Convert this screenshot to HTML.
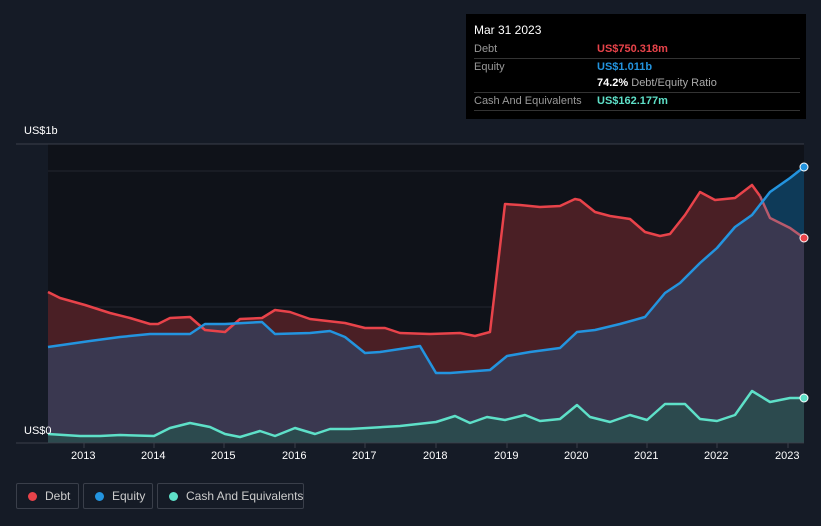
<!DOCTYPE html>
<html><head><meta charset="utf-8"><style>
body{margin:0;width:821px;height:526px;background:#151b26;font-family:"Liberation Sans",sans-serif;overflow:hidden;position:relative}
.tt{position:absolute;left:466px;top:14px;width:340px;height:105px;background:#000;color:#fff;font-size:11px}
.tt .r{position:absolute;left:8px;right:6px;height:18px;border-bottom:1px solid #333;line-height:18px}
.tt .l{color:#999;position:absolute;left:0}
.tt .v{position:absolute;left:123px;font-weight:bold}
.ax{position:absolute;color:#fff;font-size:11px}
.lg{position:absolute;top:483px;height:26px;border:1px solid #3a3f4a;border-radius:2px;color:#ccc;font-size:12px;line-height:24px;box-sizing:border-box;white-space:nowrap}
.lg i{position:absolute;left:11px;top:8px;width:9px;height:9px;border-radius:50%}
</style></head><body>
<svg width="821" height="526" style="position:absolute;left:0;top:0">
<rect x="48" y="144" width="756" height="300" fill="#0f1219"/>
<line x1="16" y1="144" x2="804" y2="144" stroke="#3a3f4a"/>
<line x1="48" y1="171" x2="804" y2="171" stroke="#23272f"/>
<line x1="48" y1="307" x2="804" y2="307" stroke="#23272f"/>
<polygon fill="#0e3a58" points="48,443 48,347 90,341 120,337 150,334 190,334 205,324 225,324 262,322 275,334 310,333 330,331 345,337 365,353 380,352 400,349 420,346 436,373 450,373 490,370 507,356 530,352 560,348 577,332 595,330 620,324 645,317 665,293 680,283 700,263 717,248 735,227 752,215 770,192 790,178 804,167 804,443"/>
<polygon fill="#4a1f25" points="48,443 48,292 60,298 85,305 110,313 130,318 150,324 158,324 170,318 190,317 205,330 225,332 240,319 262,318 275,310 290,312 310,319 345,323 365,328 385,328 400,333 430,334 460,333 475,336 490,332 505,204 520,205 540,207 560,206 575,199 580,200 595,212 610,216 630,219 645,232 660,236 670,234 685,215 700,192 715,200 735,198 752,185 760,196 770,218 790,228 804,238 804,443"/>
<polygon fill="#3a3850" points="48,443 48,347 90,341 120,337 150,334 190,334 205,324 225,324 262,322 275,334 310,333 330,331 345,337 365,353 380,352 400,349 420,346 436,373 450,373 490,370 507,356 530,352 560,348 577,332 595,330 620,324 645,317 665,293 680,283 700,263 717,248 735,227 752,215 763,205 770,218 790,228 804,238 804,443"/>
<polygon fill="#2c4a4e" points="48,443 48,434 80,436 100,436 120,435 154,436 170,428 190,423 210,427 225,434 240,437 260,431 275,436 295,428 315,434 330,429 350,429 400,426 436,422 455,416 470,423 487,417 505,420 525,415 540,421 560,419 577,405 590,417 610,422 630,415 647,420 665,404 685,404 700,419 717,421 735,415 752,391 770,402 790,398 804,398 804,443"/>
<polyline fill="none" stroke="#e8434a" stroke-width="2.5" stroke-linejoin="round" points="48,292 60,298 85,305 110,313 130,318 150,324 158,324 170,318 190,317 205,330 225,332 240,319 262,318 275,310 290,312 310,319 345,323 365,328 385,328 400,333 430,334 460,333 475,336 490,332 505,204 520,205 540,207 560,206 575,199 580,200 595,212 610,216 630,219 645,232 660,236 670,234 685,215 700,192 715,200 735,198 752,185 760,196"/>
<polyline fill="none" stroke="#b85a6c" stroke-width="2.5" points="760,196 770,218 790,228 804,238"/>
<polyline fill="none" stroke="#2394df" stroke-width="2.5" stroke-linejoin="round" points="48,347 90,341 120,337 150,334 190,334 205,324 225,324 262,322 275,334 310,333 330,331 345,337 365,353 380,352 400,349 420,346 436,373 450,373 490,370 507,356 530,352 560,348 577,332 595,330 620,324 645,317 665,293 680,283 700,263 717,248 735,227 752,215 770,192 790,178 804,167"/>
<polyline fill="none" stroke="#5ee0c8" stroke-width="2.5" stroke-linejoin="round" points="48,434 80,436 100,436 120,435 154,436 170,428 190,423 210,427 225,434 240,437 260,431 275,436 295,428 315,434 330,429 350,429 400,426 436,422 455,416 470,423 487,417 505,420 525,415 540,421 560,419 577,405 590,417 610,422 630,415 647,420 665,404 685,404 700,419 717,421 735,415 752,391 770,402 790,398 804,398"/>
<line x1="16" y1="443" x2="804" y2="443" stroke="#3a3f4a"/>
<g stroke="#3a3f4a"><line x1="84" y1="443" x2="84" y2="448"/><line x1="154" y1="443" x2="154" y2="448"/><line x1="224" y1="443" x2="224" y2="448"/><line x1="295" y1="443" x2="295" y2="448"/><line x1="365" y1="443" x2="365" y2="448"/><line x1="436" y1="443" x2="436" y2="448"/><line x1="507" y1="443" x2="507" y2="448"/><line x1="577" y1="443" x2="577" y2="448"/><line x1="647" y1="443" x2="647" y2="448"/><line x1="717" y1="443" x2="717" y2="448"/><line x1="788" y1="443" x2="788" y2="448"/></g>
<circle cx="804" cy="167" r="4" fill="#2394df" stroke="#fff"/>
<circle cx="804" cy="238" r="4" fill="#e8434a" stroke="#fff"/>
<circle cx="804" cy="398" r="4" fill="#5ee0c8" stroke="#fff"/>
</svg>
<div class="ax" style="left:24px;top:125px">US$1b</div>
<div class="ax" style="left:24px;top:425px">US$0</div>
<div class="ax" style="left:71px;top:450px">2013</div><div class="ax" style="left:141px;top:450px">2014</div><div class="ax" style="left:211px;top:450px">2015</div><div class="ax" style="left:282px;top:450px">2016</div><div class="ax" style="left:352px;top:450px">2017</div><div class="ax" style="left:423px;top:450px">2018</div><div class="ax" style="left:494px;top:450px">2019</div><div class="ax" style="left:564px;top:450px">2020</div><div class="ax" style="left:634px;top:450px">2021</div><div class="ax" style="left:704px;top:450px">2022</div><div class="ax" style="left:775px;top:450px">2023</div>
<div class="tt">
<div style="position:absolute;left:8px;top:9px;font-size:12px">Mar 31 2023</div>
<div class="r" style="top:26px"><span class="l">Debt</span><span class="v" style="color:#e8434a">US$750.318m</span></div>
<div class="r" style="top:44px;border:none"><span class="l">Equity</span><span class="v" style="color:#2394df">US$1.011b</span></div>
<div class="r" style="top:60px"><span class="v" style="color:#fff">74.2% <span style="color:#aaa;font-weight:normal">Debt/Equity Ratio</span></span></div>
<div class="r" style="top:78px"><span class="l">Cash And Equivalents</span><span class="v" style="color:#5ee0c8">US$162.177m</span></div>
</div>
<div class="lg" style="left:16px;width:63px"><i style="background:#e8434a"></i><span style="position:absolute;left:28px">Debt</span></div>
<div class="lg" style="left:83px;width:70px"><i style="background:#2394df"></i><span style="position:absolute;left:28px">Equity</span></div>
<div class="lg" style="left:157px;width:147px"><i style="background:#5ee0c8"></i><span style="position:absolute;left:28px">Cash And Equivalents</span></div>
</body></html>
